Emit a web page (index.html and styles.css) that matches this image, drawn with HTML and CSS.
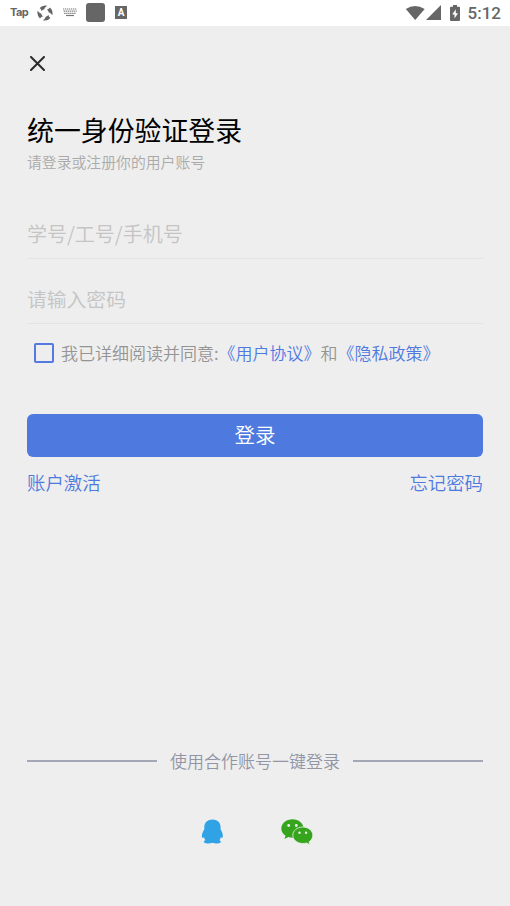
FILE: index.html
```html
<!DOCTYPE html>
<html lang="zh-CN">
<head>
<meta charset="utf-8">
<title>统一身份验证登录</title>
<link rel="stylesheet" href="styles.css">
</head>
<body>
<header class="status">
  <div class="status-left">
    <span class="tap">Tap</span>
    <svg class="swirl" width="16" height="16" viewBox="0 0 16 16"><g fill="#666"><path id="blade" d="M2.600 3A7.600 7.600 0 0 1 10.200.7Q8 1.800 7.200 4.300Q5.500 4.700 4.500 6Q4.200 4.200 2.600 3Z"/><use href="#blade" transform="rotate(90 8 8)"/><use href="#blade" transform="rotate(180 8 8)"/><use href="#blade" transform="rotate(270 8 8)"/></g></svg>
    <svg class="keyboard" width="14" height="9" viewBox="0 0 14 9"><path d="M0 1h14M.6 3.2h13M1.2 5.4h12" stroke="#777" stroke-width="1.2" stroke-dasharray="1.3 .7"/><path d="M3 7.5h8" stroke="#777" stroke-width="1.2"/></svg>
    <span class="square"></span>
    <span class="letter">A</span>
  </div>
  <div class="status-right">
    <svg width="20" height="14" viewBox="0 0 20 14"><path d="M.8 3Q10-2.8 19.700 3L10.200 14Z" fill="#666"/></svg>
    <svg class="signal" width="15" height="15" viewBox="0 0 15 15"><path d="M15 0V15H0Z" fill="#666"/></svg>
    <svg class="battery" width="10" height="16" viewBox="0 0 10 16"><path d="M3 0h4v1.8h2q1 0 1 1V15q0 1-1 1H1q-1 0-1-1V2.800q0-1 1-1h2Z" fill="#666"/><path d="M5.8 4.200 2.200 9.500H4.500V13.500L8 8.200H5.800Z" fill="#fff"/></svg>
    <span class="time">5:12</span>
  </div>
</header>
<main class="page">
  <button class="close" aria-label="关闭"><svg width="15" height="15" viewBox="0 0 15 15"><path d="M1 1 14 14M14 1 1 14" stroke="#2b2b2b" stroke-width="2" stroke-linecap="round"/></svg></button>
  <h1 class="title">统一身份验证登录</h1>
  <p class="subtitle">请登录或注册你的用户账号</p>
  <div class="field user">学号/工号/手机号</div>
  <div class="field pass">请输入密码</div>
  <div class="agreement"><span class="checkbox"></span><span>我已详细阅读并同意:</span><a>《用户协议》</a><span>和</span><a>《隐私政策》</a></div>
  <button class="submit">登录</button>
  <nav class="links"><a>账户激活</a><a>忘记密码</a></nav>
  <div class="divider"><span>使用合作账号一键登录</span></div>
  <div class="partners">
    <svg class="qq" width="22" height="25" viewBox="0 0 22 25"><path d="M11.500.5C6.700.5 3.500 3.600 3.300 7.700V10.200Q1.400 13 1 15.800Q.6 18.700 1.500 19Q2.300 19 3 18.300Q3.300 20 4.300 21.200Q2.600 21.800 2.800 23Q3.300 24.600 7 24.400Q10 24.300 11.500 23.700Q13 24.300 15.800 24.400Q19.300 24.600 19.900 23Q20.100 21.800 18.500 21.200Q19.500 20 19.800 18.300Q20.600 19 21.200 19Q22 18.700 21.800 15.800Q21.400 13 19.600 10.200V7.700C19.400 3.600 16.300.5 11.500.5Z" fill="#30a3e6"/></svg>
    <svg class="wechat" width="32" height="26" viewBox="0 0 32 26"><path d="M11.500.2C5.200.2.300 4.300.300 9.500c0 3 1.600 5.500 4.200 7.200L3.500 20l3.900-1.900q2 .6 4.100.6c6.200 0 11.100-4.100 11.100-9.200S17.700.2 11.500.2Z" fill="#36a51d"/><path d="M21.800 8C16.200 8 11.800 11.700 11.800 16.300s4.400 8.200 10 8.200q1.900 0 3.700-.5l3.400 1.800-.9-2.900c2.300-1.500 3.800-3.800 3.800-6.600C31.800 11.700 27.400 8 21.800 8Z" fill="#36a51d" stroke="#eee" stroke-width=".8"/><g fill="#eee"><circle cx="7.700" cy="6.500" r="1.400"/><circle cx="15.300" cy="6.500" r="1.400"/><circle cx="18.500" cy="13.800" r="1.200"/><circle cx="25.100" cy="13.800" r="1.200"/></g></svg>
  </div>
</main>
</body>
</html>
```
FILE: styles.css
```css
* { box-sizing: border-box; }
body {
  margin: 0;
  height: 906px;
  background: #eee;
  font-family: "Noto Sans CJK SC", sans-serif;
  font-weight: 350;
  overflow: hidden;
}
button { border: 0; padding: 0; background: none; font-family: inherit; font-weight: inherit; }
svg { display: block; flex: none; }
.status {
  height: 26px;
  padding: 0 9px 0 10px;
  background: #fff;
  display: flex;
  justify-content: space-between;
  align-items: center;
  color: #666;
}
.status-left, .status-right { display: flex; align-items: center; }
.status-left { height: 25px; align-self: flex-start; }
.tap { width: 27px; font: 700 11px/18px Inter, sans-serif; letter-spacing: -0.6px; padding-bottom: 2px; }
.keyboard { margin-left: 10px; }
.square { width: 19px; height: 19px; margin-left: 9px; border-radius: 3px; background: #666; }
.letter {
  width: 12px;
  height: 13px;
  margin-left: 10px;
  background: #666;
  color: #fff;
  font: 700 10px/13px Roboto, sans-serif;
  text-align: center;
}
.battery { margin: 0 8px 0 9px; }
.status-right { padding-bottom: 1px; }
.time { font: 500 17px/26px Roboto, sans-serif; padding-top: 1px; }
.signal { margin-left: 1px; }
.page { padding: 28px 27px 0; display: flex; flex-direction: column; }
.close { width: 21px; height: 18px; display: flex; align-items: center; justify-content: center; }
.title { margin: 38px 0 0; font-size: 26.9px; line-height: 40px; font-weight: 400; color: #000; }
.subtitle { margin: 0; font-size: 14.85px; line-height: 24px; color: #aaa; }
.field { border-bottom: 1px solid #e4e4e4; font-size: 19.8px; color: #c4c4c4; line-height: 30px; }
.user { height: 40px; margin-top: 45px; font-size: 20px; }
.pass { height: 40px; margin-top: 25px; line-height: 29px; }
.agreement {
  height: 30px;
  margin-top: 14px;
  padding-left: 7px;
  display: flex;
  align-items: center;
  font-size: 17px;
  line-height: 30px;
  color: #949494;
  white-space: nowrap;
}
.agreement a, .links a { color: #4e7adf; }
.checkbox { width: 20px; height: 20px; margin-right: 7px; border: 2px solid #5579df; border-radius: 2px; }
.submit { height: 43px; margin-top: 46px; border-radius: 6px; background: #4e7adf; color: #fff; font-size: 20.5px; line-height: 41px; padding-bottom: 2px; }
.links { height: 30px; margin-top: 10px; display: flex; justify-content: space-between; font-size: 18.4px; line-height: 30px; }
.divider {
  height: 30px;
  margin-top: 249px;
  display: flex;
  align-items: center;
  gap: 13px;
  font-size: 17px;
  line-height: 30px;
  color: #9295a5;
}
.divider::before, .divider::after { content: ""; flex: 1; height: 2px; background: #a4a7b5; }
.partners { margin-top: 43px; padding-left: 174px; display: flex; gap: 58px; }
```
